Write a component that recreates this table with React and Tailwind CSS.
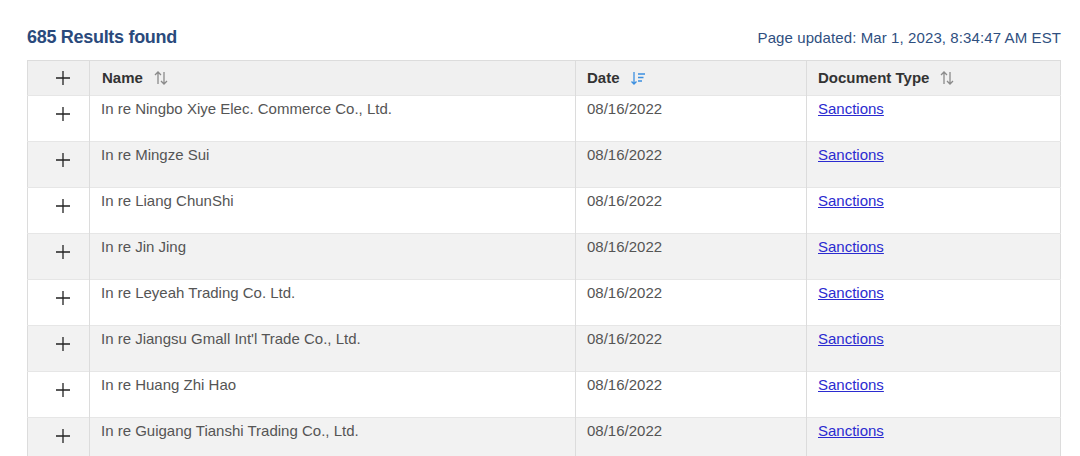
import React from "react";

const rows = [
  "In re Ningbo Xiye Elec. Commerce Co., Ltd.",
  "In re Mingze Sui",
  "In re Liang ChunShi",
  "In re Jin Jing",
  "In re Leyeah Trading Co. Ltd.",
  "In re Jiangsu Gmall Int'l Trade Co., Ltd.",
  "In re Huang Zhi Hao",
  "In re Guigang Tianshi Trading Co., Ltd.",
];

function Plus() {
  return (
    <svg width="16" height="16" viewBox="0 0 16 16" className="text-[#222]">
      <path d="M8 1v14M1 8h14" stroke="currentColor" strokeWidth="1.3" fill="none" />
    </svg>
  );
}

function SortBoth() {
  return (
    <svg width="16" height="16" viewBox="0 0 16 16" className="text-[#8a8a8a]">
      <path d="M5 14V2M2 5l3-3 3 3M11 2v12M8 11l3 3 3-3" stroke="currentColor" strokeWidth="1.3" fill="none" />
    </svg>
  );
}

function SortDesc() {
  return (
    <svg width="16" height="16" viewBox="0 0 16 16" className="text-[#3b8fe0]">
      <path d="M4 2v12M1.5 11.5L4 14l2.5-2.5M8 4h7M8 7.5h5.5M8 11h4" stroke="currentColor" strokeWidth="1.3" fill="none" />
    </svg>
  );
}

export default function App() {
  return (
    <div className="bg-white w-[1080px] h-[456px] overflow-hidden pt-[24px] pl-[27px] font-['Liberation_Sans',sans-serif]">
      <div className="w-[1034px] flex items-baseline justify-between h-[24px]">
        <h2 className="text-[18px] font-bold text-[#2a4a7c] tracking-[-0.3px]">685 Results found</h2>
        <span className="text-[15px] text-[#2f4f7f] tracking-[0.1px]">Page updated: Mar 1, 2023, 8:34:47 AM EST</span>
      </div>
      <table className="mt-[12px] w-[1034px] border border-[#dcdcdc] border-collapse text-[15px] text-[#555]">
        <thead>
          <tr className="bg-[#f0f0f0] h-[35px] text-[#333] font-semibold">
            <th className="w-[62px] border-r border-[#dcdcdc] pl-[9px]">
              <div className="flex justify-center"><Plus /></div>
            </th>
            <th className="w-[486px] border-r border-[#dcdcdc] text-left pl-[12px]">
              <div className="flex items-center gap-[10px]">Name <SortBoth /></div>
            </th>
            <th className="w-[231px] border-r border-[#dcdcdc] text-left pl-[11px]">
              <div className="flex items-center gap-[10px]">Date <SortDesc /></div>
            </th>
            <th className="text-left pl-[11px]">
              <div className="flex items-center gap-[10px]">Document Type <SortBoth /></div>
            </th>
          </tr>
        </thead>
        <tbody>
          {rows.map((name, i) => (
            <tr key={name} className={`h-[46px] border-t border-[#e6e6e6] ${i % 2 ? "bg-[#f2f2f2]" : "bg-white"}`}>
              <td className="border-r border-[#dcdcdc] align-top pt-[10px] pl-[9px]">
                <div className="flex justify-center"><Plus /></div>
              </td>
              <td className="border-r border-[#dcdcdc] align-top pl-[11px] pt-[2px]">{name}</td>
              <td className="border-r border-[#dcdcdc] align-top pl-[11px] pt-[2px]">08/16/2022</td>
              <td className="align-top pl-[11px] pt-[2px]">
                <a href="#" className="text-[#2b2bd0] underline">Sanctions</a>
              </td>
            </tr>
          ))}
        </tbody>
      </table>
    </div>
  );
}
